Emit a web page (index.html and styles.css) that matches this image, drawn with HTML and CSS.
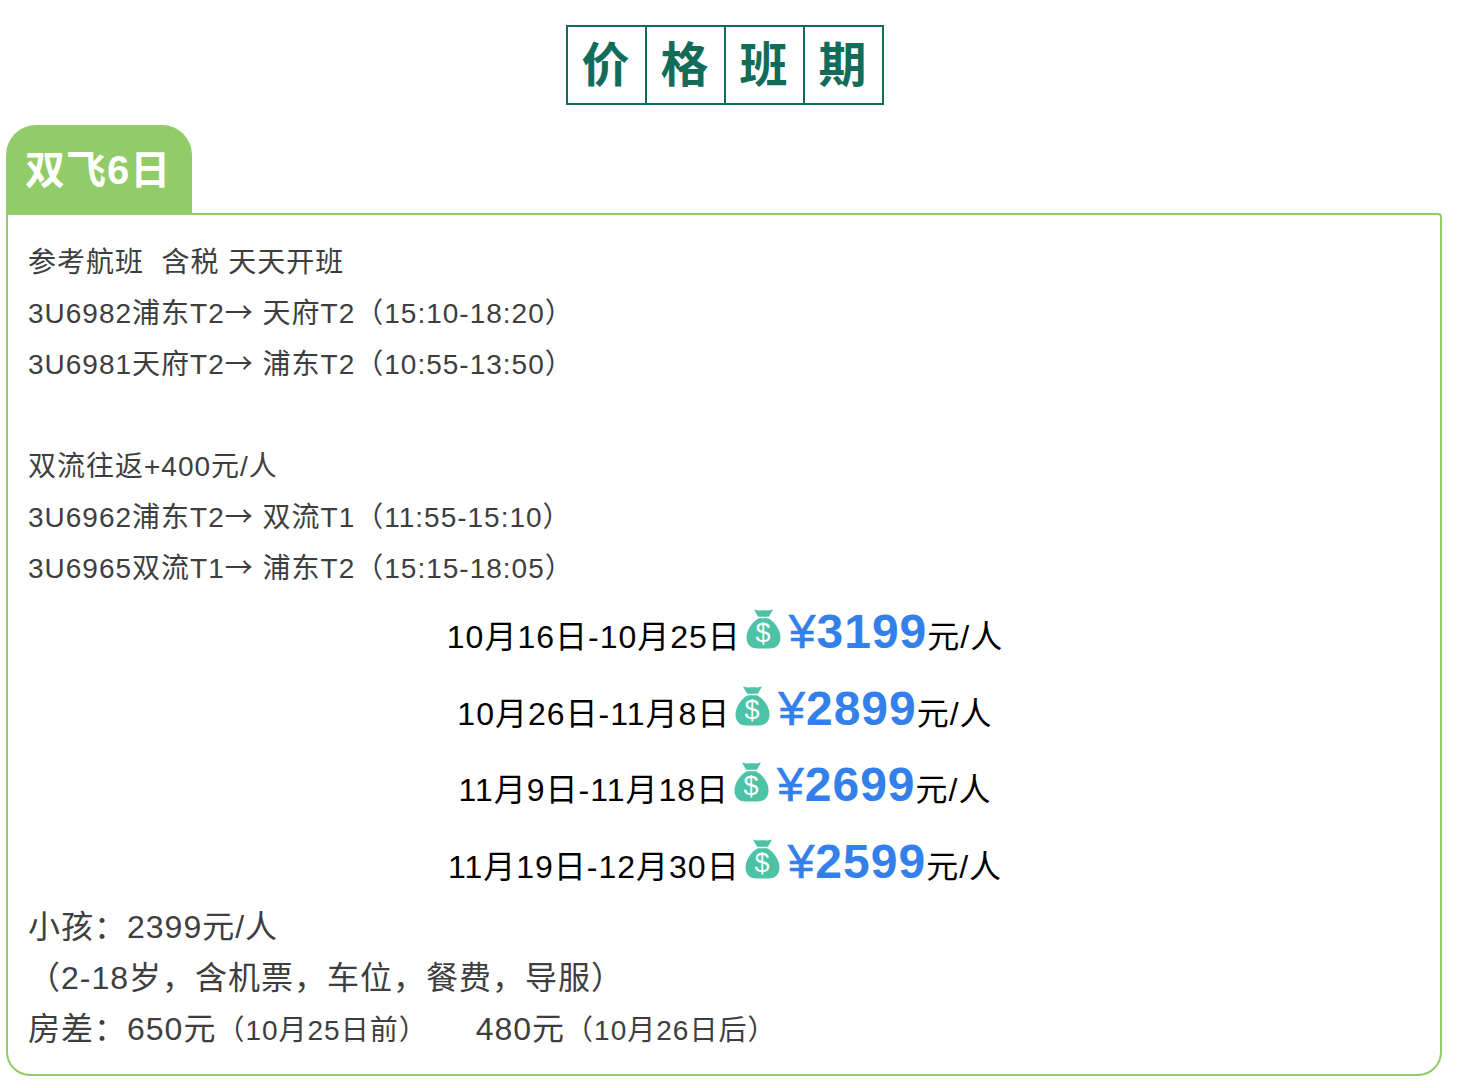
FILE: index.html
```html
<!DOCTYPE html>
<html lang="zh-CN">
<head>
<meta charset="utf-8">
<title>价格班期</title>
<link rel="stylesheet" href="styles.css">
</head>
<body>
<svg class="defs" width="0" height="0" aria-hidden="true"><defs>
<symbol id="bag" viewBox="0 0 35 40">
<path fill="#4cc2a6" d="M9 .5c3 1.500 5.500.8 8.500.8s5.500.7 8.500-.8c.6 0 .8.5.5 1.100L22.800 7.800h-10.600L8.500 1.600C8.200 1 8.400.5 9 .5z"/>
<path fill="#4cc2a6" d="M12.800 9.200h9.400C29 13 34.500 21 34.500 28.500c0 8-5.500 11-11 11h-12c-5.500 0-11-3-11-11C.5 21 6 13 12.800 9.200z"/>
<text class="bag-sign" x="17.500" y="33" text-anchor="middle">$</text>
</symbol>
</defs></svg>
<main class="page">
<h1 class="title"><span class="title-cell">价</span><span class="title-cell">格</span><span class="title-cell">班</span><span class="title-cell">期</span></h1>
<div class="tab">双飞6日</div>
<section class="panel">
<p class="line">参考航班&nbsp; 含税 天天开班</p>
<p class="line">3U6982浦东T2<span class="arrow">→</span> 天府T2（15:10-18:20）</p>
<p class="line">3U6981天府T2<span class="arrow">→</span> 浦东T2（10:55-13:50）</p>
<p class="line">&nbsp;</p>
<p class="line">双流往返+400元/人</p>
<p class="line">3U6962浦东T2<span class="arrow">→</span> 双流T1（11:55-15:10）</p>
<p class="line">3U6965双流T1<span class="arrow">→</span> 浦东T2（15:15-18:05）</p>
<div class="prices">
<p class="price-row">10月16日-10月25日<svg class="bag"><use href="#bag"/></svg><b class="amount"><span class="yen">¥</span>3199</b>元/人</p>
<p class="price-row">10月26日-11月8日<svg class="bag"><use href="#bag"/></svg><b class="amount"><span class="yen">¥</span>2899</b>元/人</p>
<p class="price-row">11月9日-11月18日<svg class="bag"><use href="#bag"/></svg><b class="amount"><span class="yen">¥</span>2699</b>元/人</p>
<p class="price-row">11月19日-12月30日<svg class="bag"><use href="#bag"/></svg><b class="amount"><span class="yen">¥</span>2599</b>元/人</p>
</div>
<div class="notes">
<p class="line large">小孩：2399元/人</p>
<p class="line large">（2-18岁，含机票，车位，餐费，导服）</p>
<p class="line large">房差：650元<span class="small">（10月25日前）</span><span class="gap"></span>480元<span class="small">（10月26日后）</span></p>
</div>
</section>
</main>
</body>
</html>
```
FILE: styles.css
```css
* { box-sizing: border-box; }
html, body { margin: 0; padding: 0; background: #fff; }
body { font-family: "Liberation Sans", "Noto Sans CJK SC", sans-serif; }
.defs { position: absolute; }
.page { width: 1458px; height: 1088px; padding: 25px 16px 0 6px; display: flex; flex-direction: column; }
.title { margin: 0 0 20px 560px; display: flex; align-self: flex-start; border: 2px solid #116d5a; color: #116d5a; font-size: 48px; font-weight: 700; line-height: 78px; height: 80px; }
.title-cell { width: 79px; text-align: center; border-left: 2px solid #116d5a; padding-right: 2px; }
.title-cell:first-child { width: 77px; border-left: 0; }
.tab { width: 186px; height: 90px; background: #92cc68; color: #fff; border-radius: 30px 30px 0 0; font-size: 40px; font-weight: 700; letter-spacing: 1px; line-height: 90px; padding-left: 19px; }
.panel { margin-top: -2px; height: 863px; border: 2px solid #92cc68; border-radius: 0 4px 24px 24px; padding: 22px 20px 0; color: #3e3e3e; }
.line { margin: 0; font-size: 28px; line-height: 51px; letter-spacing: 1px; white-space: pre-wrap; }
.arrow { font-family: "Noto Sans CJK SC", sans-serif; line-height: 0; }
.large { font-size: 32px; }
.small { font-size: 28px; }
.gap { display: inline-block; width: 48px; }
.prices { color: #000; letter-spacing: 1px; }
.notes { margin-top: 1px; }
.price-row { margin: 0; padding-left: 2px; height: 76.700px; display: flex; justify-content: center; align-items: baseline; font-size: 32px; line-height: 76.700px; white-space: pre; }
.bag { width: 35px; height: 40px; margin: 15px 8px 0 5px; align-self: flex-start; }
.bag-sign { font-size: 27px; fill: #fff; font-family: "Liberation Sans", sans-serif; }
.amount { color: #3380ea; font-size: 48px; }
.yen { font-weight: 400; -webkit-text-stroke: 0.6px #3380ea; }
```
